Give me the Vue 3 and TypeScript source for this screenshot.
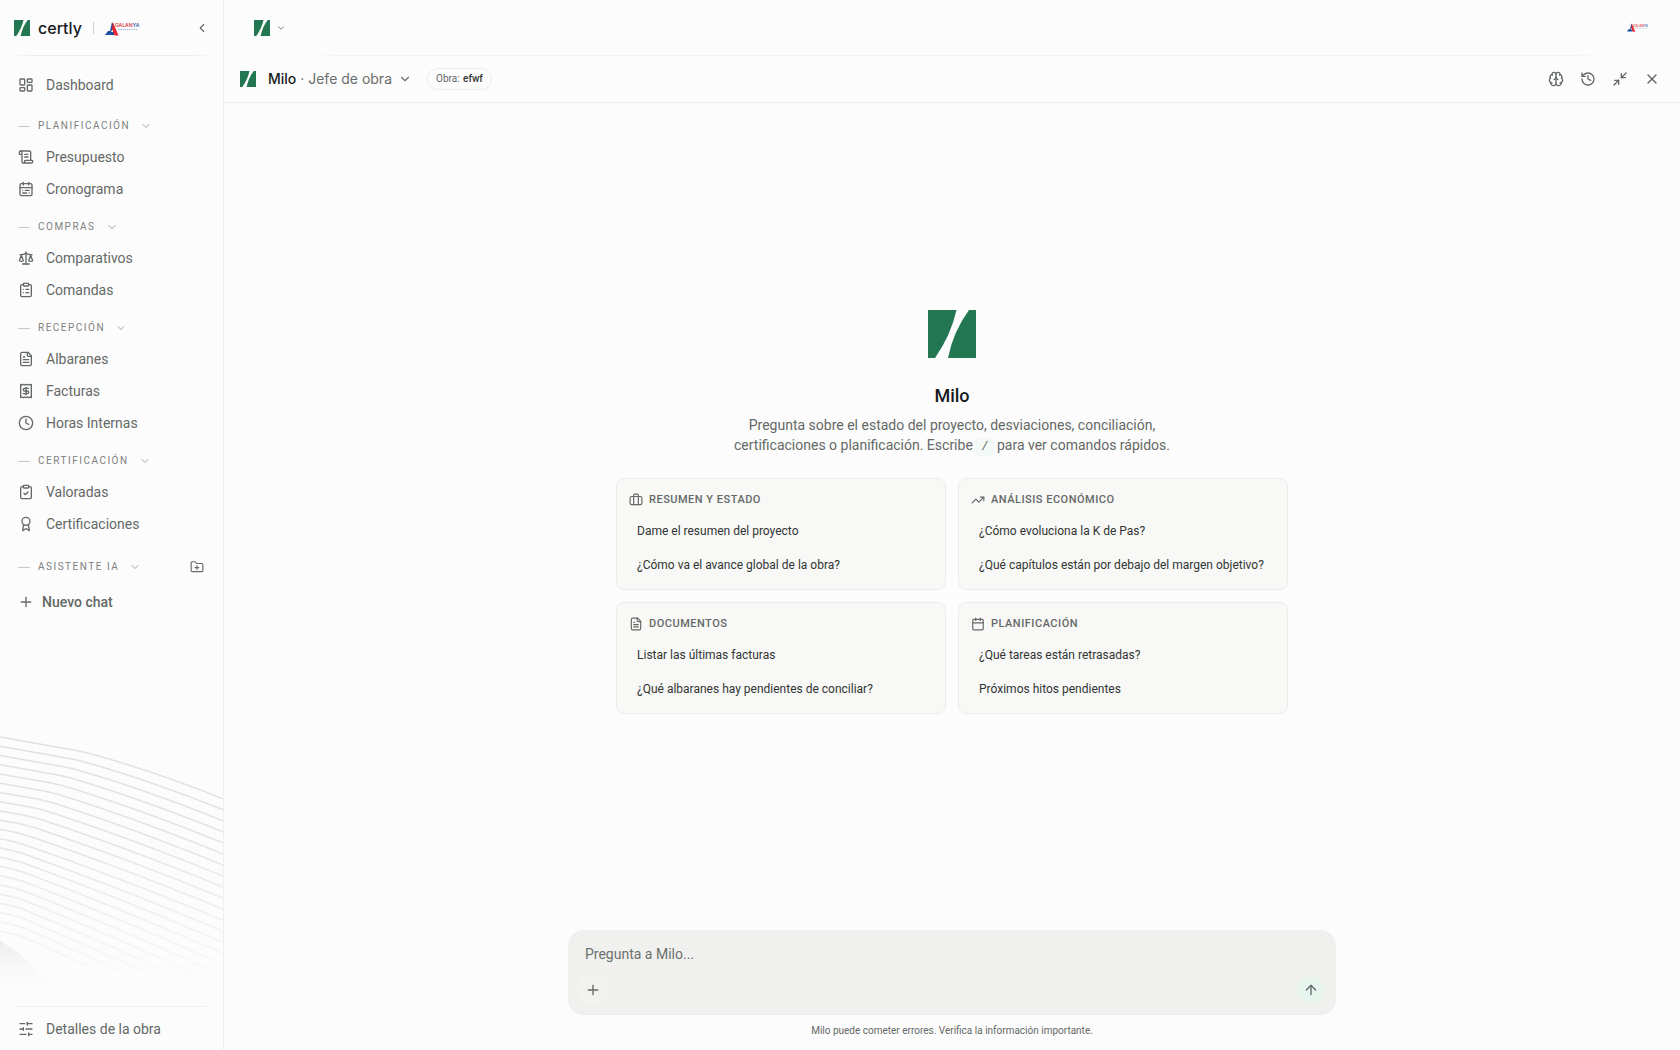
<script setup lang="ts">
import { ref, h, type FunctionalComponent } from 'vue'

const icons: Record<string, string[]> = {
  dashboard: ['M4 3h5a1 1 0 0 1 1 1v7a1 1 0 0 1-1 1H4a1 1 0 0 1-1-1V4a1 1 0 0 1 1-1Z', 'M15 3h5a1 1 0 0 1 1 1v3a1 1 0 0 1-1 1h-5a1 1 0 0 1-1-1V4a1 1 0 0 1 1-1Z', 'M15 12h5a1 1 0 0 1 1 1v7a1 1 0 0 1-1 1h-5a1 1 0 0 1-1-1v-7a1 1 0 0 1 1-1Z', 'M4 16h5a1 1 0 0 1 1 1v3a1 1 0 0 1-1 1H4a1 1 0 0 1-1-1v-3a1 1 0 0 1 1-1Z'],
  scroll: ['M15 12h-5', 'M15 8h-5', 'M19 17V5a2 2 0 0 0-2-2H4', 'M8 21h12a2 2 0 0 0 2-2v-1a1 1 0 0 0-1-1H11a1 1 0 0 0-1 1v1a2 2 0 1 1-4 0V5a2 2 0 1 0-4 0v2a1 1 0 0 0 1 1h3'],
  calendarRange: ['M5 4h14a2 2 0 0 1 2 2v14a2 2 0 0 1-2 2H5a2 2 0 0 1-2-2V6a2 2 0 0 1 2-2Z', 'M16 2v4', 'M3 10h18', 'M8 2v4', 'M17 14h-6', 'M13 18H7', 'M7 14h.01', 'M17 18h.01'],
  calendar: ['M5 4h14a2 2 0 0 1 2 2v14a2 2 0 0 1-2 2H5a2 2 0 0 1-2-2V6a2 2 0 0 1 2-2Z', 'M16 2v4', 'M3 10h18', 'M8 2v4'],
  scale: ['m16 16 3-8 3 8c-.87.65-1.92 1-3 1s-2.13-.35-3-1Z', 'm2 16 3-8 3 8c-.87.65-1.92 1-3 1s-2.13-.35-3-1Z', 'M7 21h10', 'M12 3v18', 'M3 7h2c2 0 5-1 7-2 2 1 5 2 7 2h2'],
  clipboardList: ['M9 2h6a1 1 0 0 1 1 1v2a1 1 0 0 1-1 1H9a1 1 0 0 1-1-1V3a1 1 0 0 1 1-1Z', 'M16 4h2a2 2 0 0 1 2 2v14a2 2 0 0 1-2 2H6a2 2 0 0 1-2-2V6a2 2 0 0 1 2-2h2', 'M12 11h4', 'M12 16h4', 'M8 11h.01', 'M8 16h.01'],
  clipboardCheck: ['M9 2h6a1 1 0 0 1 1 1v2a1 1 0 0 1-1 1H9a1 1 0 0 1-1-1V3a1 1 0 0 1 1-1Z', 'M16 4h2a2 2 0 0 1 2 2v14a2 2 0 0 1-2 2H6a2 2 0 0 1-2-2V6a2 2 0 0 1 2-2h2', 'm9 14 2 2 4-4'],
  file: ['M15 2H6a2 2 0 0 0-2 2v16a2 2 0 0 0 2 2h12a2 2 0 0 0 2-2V7Z', 'M14 2v4a2 2 0 0 0 2 2h4', 'M10 9H8', 'M16 13H8', 'M16 17H8'],
  receipt: ['M4 2v20l2-1 2 1 2-1 2 1 2-1 2 1 2-1 2 1V2l-2 1-2-1-2 1-2-1-2 1-2-1-2 1Z', 'M16 8h-6a2 2 0 1 0 0 4h4a2 2 0 1 1 0 4H8', 'M12 17.5v-11'],
  clock: ['M12 2a10 10 0 1 0 0 20 10 10 0 0 0 0-20Z', 'M12 6v6l4 2'],
  award: ['m15.477 12.89 1.515 8.526a.5.5 0 0 1-.81.47l-3.58-2.687a1 1 0 0 0-1.197 0l-3.586 2.686a.5.5 0 0 1-.81-.469l1.514-8.526', 'M12 2a6 6 0 1 0 0 12 6 6 0 0 0 0-12Z'],
  folderPlus: ['M12 10v6', 'M9 13h6', 'M20 20a2 2 0 0 0 2-2V8a2 2 0 0 0-2-2h-7.9a2 2 0 0 1-1.69-.9L9.6 3.9A2 2 0 0 0 7.93 3H4a2 2 0 0 0-2 2v13a2 2 0 0 0 2 2Z'],
  sliders: ['M21 4h-7', 'M10 4H3', 'M21 12h-9', 'M8 12H3', 'M21 20h-5', 'M12 20H3', 'M14 2v4', 'M8 10v4', 'M16 18v4'],
  briefcase: ['M16 20V4a2 2 0 0 0-2-2h-4a2 2 0 0 0-2 2v16', 'M4 6h16a2 2 0 0 1 2 2v10a2 2 0 0 1-2 2H4a2 2 0 0 1-2-2V8a2 2 0 0 1 2-2Z'],
  trending: ['M16 7h6v6', 'm22 7-8.5 8.5-5-5L2 17'],
  brain: ['M12 18V5', 'M15 13a4.17 4.17 0 0 1-3-4 4.17 4.17 0 0 1-3 4', 'M17.598 6.5A3 3 0 1 0 12 5a3 3 0 1 0-5.598 1.5', 'M17.997 5.125a4 4 0 0 1 2.526 5.77', 'M18 18a4 4 0 0 0 2-7.464', 'M19.967 17.483A4 4 0 1 1 12 18a4 4 0 1 1-7.967-.517', 'M6 18a4 4 0 0 1-2-7.464', 'M6.003 5.125a4 4 0 0 0-2.526 5.77'],
  history: ['M3 12a9 9 0 1 0 9-9 9.75 9.75 0 0 0-6.74 2.74L3 8', 'M3 3v5h5', 'M12 7v5l4 2'],
  minimize: ['m14 10 7-7', 'M20 10h-6V4', 'm3 21 7-7', 'M4 14h6v6'],
  close: ['M18 6 6 18', 'm6 6 12 12'],
  plus: ['M5 12h14', 'M12 5v14'],
  arrowUp: ['m5 12 7-7 7 7', 'M12 19V5'],
  chevronDown: ['m6 9 6 6 6-6'],
  chevronLeft: ['m15 18-6-6 6-6'],
}

const Icon: FunctionalComponent<{ name: string; size?: number }> = (props) =>
  h('svg', {
    width: props.size ?? 16, height: props.size ?? 16, viewBox: '0 0 24 24', fill: 'none',
    stroke: 'currentColor', 'stroke-width': 2, 'stroke-linecap': 'round', 'stroke-linejoin': 'round', 'aria-hidden': 'true',
    style: 'display:block;flex:none',
  }, icons[props.name].map((d) => h('path', { d })))
Icon.props = ['name', 'size']

const BrandMark: FunctionalComponent<{ size: number }> = (props) =>
  h('svg', { width: props.size, height: props.size, viewBox: '0 0 48 48', fill: '#227652', 'aria-hidden': 'true', style: 'display:block;flex:none' }, [
    h('path', { d: 'M0 0H28.5Q23 25 7 48H0Z' }),
    h('path', { d: 'M41 0H48V48H20Q25 22 41 0Z' }),
  ])
BrandMark.props = ['size']

const ClientLogo: FunctionalComponent<{ width: number }> = (props) =>
  h('svg', { width: props.width, viewBox: '0 0 36 15', role: 'img', 'aria-label': 'Galanya', style: 'display:block;flex:none' }, [
    h('path', { d: 'M0 14 3 10H5L7 1 9 5 6 11H9V14Z', fill: '#1d4fa3' }),
    h('path', { d: 'M8 1 9.500 5 13.500 14.500H9.500L7 8Z', fill: '#e5262e' }),
    h('text', { x: 10, y: 6, 'font-size': 5, 'font-weight': 600, 'font-family': 'Inter, sans-serif', fill: '#e0404a' }, [
      'GALAN', h('tspan', { fill: '#3d63ad' }, 'YA'),
    ]),
    h('path', { d: 'M13 8.500H33', stroke: '#a9b9da', 'stroke-width': 1, 'stroke-dasharray': '1.500 .700' }),
  ])
ClientLogo.props = ['width']

const sections = [
  { title: 'Planificación', items: [{ icon: 'scroll', label: 'Presupuesto' }, { icon: 'calendarRange', label: 'Cronograma' }] },
  { title: 'Compras', items: [{ icon: 'scale', label: 'Comparativos' }, { icon: 'clipboardList', label: 'Comandas' }] },
  { title: 'Recepción', items: [{ icon: 'file', label: 'Albaranes' }, { icon: 'receipt', label: 'Facturas' }, { icon: 'clock', label: 'Horas Internas' }] },
  { title: 'Certificación', items: [{ icon: 'clipboardCheck', label: 'Valoradas' }, { icon: 'award', label: 'Certificaciones' }] },
]

const cards = [
  { icon: 'briefcase', title: 'Resumen y estado', prompts: ['Dame el resumen del proyecto', '¿Cómo va el avance global de la obra?'] },
  { icon: 'trending', title: 'Análisis económico', prompts: ['¿Cómo evoluciona la K de Pas?', '¿Qué capítulos están por debajo del margen objetivo?'] },
  { icon: 'file', title: 'Documentos', prompts: ['Listar las últimas facturas', '¿Qué albaranes hay pendientes de conciliar?'] },
  { icon: 'calendar', title: 'Planificación', prompts: ['¿Qué tareas están retrasadas?', 'Próximos hitos pendientes'] },
]

const actions = [
  { icon: 'brain', label: 'Memoria' },
  { icon: 'history', label: 'Historial' },
  { icon: 'minimize', label: 'Minimizar' },
  { icon: 'close', label: 'Cerrar' },
]

// Contour lines: each one bends at a knee that drifts left as the lines go down.
const contours = Array.from({ length: 22 }, (_, i) => {
  const left = 2 + i * 9.3
  const right = 64 + i * 11.1
  const knee = Math.max(88 - i * 7, 12)
  const kneeY = left + knee * 0.18
  const midX = (knee + 224) / 2
  const midY = (kneeY + right) / 2 - 4
  return `M0 ${left}L${knee - 10} ${kneeY - 2}Q${knee} ${kneeY} ${knee + 10} ${kneeY + 3}Q${midX} ${midY} 224 ${right}`
})

const message = ref('')
</script>

<template>
  <div class="app">
    <aside class="sidebar">
      <svg class="waves" viewBox="0 0 224 270" fill="none" aria-hidden="true">
        <defs>
          <linearGradient id="fade" x1="0" y1="0" x2="0" y2="1">
            <stop offset="0" stop-color="#fff" />
            <stop offset=".4" stop-color="#fff" stop-opacity=".85" />
            <stop offset=".95" stop-color="#fff" stop-opacity="0" />
          </linearGradient>
          <mask id="wave-mask"><rect width="224" height="270" fill="url(#fade)" /></mask>
          <linearGradient id="corner" x1="0" y1="0" x2="0" y2="1">
            <stop offset="0" stop-color="#ececec" />
            <stop offset="1" stop-color="#fcfcfc" stop-opacity="0" />
          </linearGradient>
        </defs>
        <g mask="url(#wave-mask)" stroke="#e0e0e0" stroke-width="1.5">
          <path v-for="d in contours" :key="d" :d="d" />
        </g>
        <path d="M0 206L18 219Q40 236 60 262H0Z" fill="url(#corner)" />
      </svg>

      <header class="brand">
        <BrandMark :size="16" />
        <span class="brand-name">certly</span>
        <span class="brand-divider"></span>
        <ClientLogo :width="36" />
        <button class="collapse" aria-label="Contraer menú"><Icon name="chevronLeft" :size="14" /></button>
      </header>

      <nav class="nav">
        <a href="#" class="nav-item"><Icon name="dashboard" />Dashboard</a>
        <section v-for="s in sections" :key="s.title" class="group">
          <button class="group-title"><i class="dash"></i>{{ s.title }}<Icon name="chevronDown" :size="12" /></button>
          <a v-for="item in s.items" :key="item.label" href="#" class="nav-item"><Icon :name="item.icon" />{{ item.label }}</a>
        </section>
        <section class="group assistant">
          <div class="group-row">
            <button class="group-title"><i class="dash"></i>Asistente IA<Icon name="chevronDown" :size="12" /></button>
            <button class="icon-button" aria-label="Nueva carpeta"><Icon name="folderPlus" :size="14" /></button>
          </div>
          <button class="nav-item new-chat"><Icon name="plus" />Nuevo chat</button>
        </section>
      </nav>

      <footer class="sidebar-footer">
        <a href="#" class="nav-item"><Icon name="sliders" />Detalles de la obra</a>
      </footer>
    </aside>

    <main class="main">
      <header class="topbar">
        <button class="workspace" aria-label="Cambiar espacio"><BrandMark :size="16" /><Icon name="chevronDown" :size="10" /></button>
        <ClientLogo :width="22" />
      </header>

      <header class="agent-bar">
        <BrandMark :size="16" />
        <button class="agent"><span><b>Milo</b> · Jefe de obra</span><Icon name="chevronDown" :size="14" /></button>
        <span class="pill">Obra: <b>efwf</b></span>
        <div class="actions">
          <button v-for="a in actions" :key="a.icon" class="icon-button" :aria-label="a.label"><Icon :name="a.icon" /></button>
        </div>
      </header>

      <section class="welcome">
        <BrandMark :size="48" />
        <h1>Milo</h1>
        <p>Pregunta sobre el estado del proyecto, desviaciones, conciliación,<br />certificaciones o planificación. Escribe <code>/</code> para ver comandos rápidos.</p>
        <div class="cards">
          <article v-for="c in cards" :key="c.title" class="card">
            <h2><Icon :name="c.icon" :size="14" />{{ c.title }}</h2>
            <button v-for="p in c.prompts" :key="p" class="prompt">{{ p }}</button>
          </article>
        </div>
      </section>

      <footer class="composer-area">
        <form class="composer" @submit.prevent>
          <textarea v-model="message" rows="1" placeholder="Pregunta a Milo..." aria-label="Mensaje para Milo"></textarea>
          <div class="composer-actions">
            <button type="button" class="attach" aria-label="Adjuntar"><Icon name="plus" /></button>
            <button type="submit" class="send" aria-label="Enviar"><Icon name="arrowUp" /></button>
          </div>
        </form>
        <small>Milo puede cometer errores. Verifica la información importante.</small>
      </footer>
    </main>
  </div>
</template>

<style>
body {
  margin: 0;
  background: #fcfcfc;
}
</style>

<style scoped>
.app {
  display: flex;
  min-height: 100vh;
  background: #fcfcfc;
  color: #646966;
  font: 14px/20px Roboto, "Liberation Sans", sans-serif;
}
.app * {
  box-sizing: border-box;
}
button {
  display: flex;
  align-items: center;
  padding: 0;
  border: 0;
  background: none;
  color: inherit;
  font: inherit;
  cursor: pointer;
}
a {
  color: inherit;
  text-decoration: none;
}

.sidebar {
  position: relative;
  display: flex;
  flex: none;
  flex-direction: column;
  width: 224px;
  border-right: 1px solid #efefef;
}
.waves {
  position: absolute;
  left: 0;
  bottom: 46px;
  width: 100%;
  pointer-events: none;
}
.brand {
  display: flex;
  align-items: center;
  height: 56px;
  padding: 0 14px;
  background: linear-gradient(90deg, transparent, #ececec 10%, #ececec 90%, transparent) 12px 100% / 200px 1px no-repeat;
}
.brand-name {
  margin-left: 8px;
  color: #16191d;
  font: 500 16px/20px Inter, sans-serif;
}
.brand-divider {
  width: 1px;
  height: 12px;
  margin: 0 11px;
  background: #cfcfcf;
}
.collapse {
  margin-left: auto;
}

.nav {
  flex: 1;
  padding: 14px 12px;
}
.nav-item {
  display: flex;
  align-items: center;
  gap: 12px;
  height: 30px;
  padding: 0 6px;
  font-size: 14px;
}
.nav-item + .nav-item {
  margin-top: 2px;
}
.group {
  padding-top: 13px;
}
.nav-item + .group {
  padding-top: 16px;
}
.group-title {
  gap: 8px;
  height: 20px;
  margin-bottom: 6px;
  padding: 0 6px;
  color: #7d817f;
  font-size: 10px;
  letter-spacing: 1.5px;
  text-transform: uppercase;
}
.group-title svg {
  margin-left: 2px;
  color: #a2a5a3;
}
.dash {
  width: 12px;
  height: 1px;
  background: #c6c8c6;
}
.group.assistant {
  padding-top: 18px;
}
.group-row {
  display: flex;
  justify-content: space-between;
  padding-right: 7px;
  margin-bottom: 4px;
}
.group-row .icon-button {
  height: 20px;
}
.new-chat {
  gap: 8px;
  font-weight: 500;
}
.sidebar-footer {
  margin: 0 16px 6px;
  padding-top: 7px;
  border-top: 1px solid #efefef;
}
.sidebar-footer .nav-item {
  padding: 0 2px;
}

.main {
  display: flex;
  flex: 1;
  flex-direction: column;
  min-width: 0;
}
.topbar {
  display: flex;
  align-items: center;
  justify-content: space-between;
  height: 56px;
  padding: 0 31px 0 30px;
  background: linear-gradient(90deg, transparent 6%, #f1f1f1 8%, #f1f1f1 92%, transparent 95%) 0 100% / 100% 1px no-repeat;
}
.workspace {
  gap: 6px;
}
.agent-bar {
  display: flex;
  align-items: center;
  height: 47px;
  padding: 0 20px 0 16px;
  border-bottom: 1px solid #ececec;
}
.agent {
  gap: 6px;
  margin: 0 15px 0 12px;
  color: #6a6e6b;
  font: 14px/20px Inter, sans-serif;
}
.agent b {
  color: #16191d;
  font-weight: 500;
}
.pill {
  padding: 0 8px;
  border: 1px solid #ececec;
  border-radius: 11px;
  font-size: 10px;
}
.pill b {
  margin-left: 1px;
  color: #303532;
  font-weight: 500;
}
.actions {
  display: flex;
  gap: 16px;
  margin-left: auto;
}

.welcome {
  display: flex;
  flex: 1;
  flex-direction: column;
  align-items: center;
  justify-content: center;
  padding: 24px;
}
h1 {
  margin: 26px 0 7px;
  color: #16191d;
  font-size: 18px;
  font-weight: 500;
  line-height: 24px;
}
p {
  margin: 0;
  text-align: center;
}
code {
  padding: 2px 5px;
  border-radius: 4px;
  background: #f3f9f6;
  font: 12px/16px "Liberation Mono", monospace;
}
.cards {
  display: grid;
  grid-template-columns: 1fr 1fr;
  gap: 12px;
  width: 100%;
  max-width: 672px;
  margin-top: 23px;
}
.card {
  padding: 13px 12px 7px;
  border: 1px solid #ececeb;
  border-radius: 8px;
  background: #f8f8f7;
}
h2 {
  display: flex;
  align-items: center;
  gap: 6px;
  margin: 0 0 6px;
  font-size: 11px;
  font-weight: 500;
  line-height: 16px;
  letter-spacing: 0.5px;
  text-transform: uppercase;
}
.prompt {
  width: 100%;
  height: 34px;
  padding: 0 8px;
  color: #303532;
  font-size: 12px;
  text-align: left;
}

.composer-area {
  display: flex;
  flex-direction: column;
  align-items: center;
  padding: 9px 24px;
}
.composer {
  width: 100%;
  max-width: 768px;
  padding: 13px 8px 8px;
  border: 1px solid #eeeeec;
  border-radius: 16px;
  background: #f0f0ee;
}
textarea {
  display: block;
  width: 100%;
  height: 20px;
  margin-bottom: 10px;
  padding: 0 8px;
  border: 0;
  outline: 0;
  background: none;
  color: #303532;
  font: inherit;
  resize: none;
}
textarea::placeholder {
  color: #6c706d;
}
.composer-actions {
  display: flex;
  justify-content: space-between;
}
.attach,
.send {
  justify-content: center;
  width: 32px;
  height: 32px;
  border-radius: 50%;
}
.attach {
  background: #f2f2f0;
}
.send {
  background: radial-gradient(circle, #e6f6ef 40%, #f0f0ee 72%);
}
small {
  margin-top: 6px;
  font-size: 10px;
  line-height: 20px;
}
</style>
